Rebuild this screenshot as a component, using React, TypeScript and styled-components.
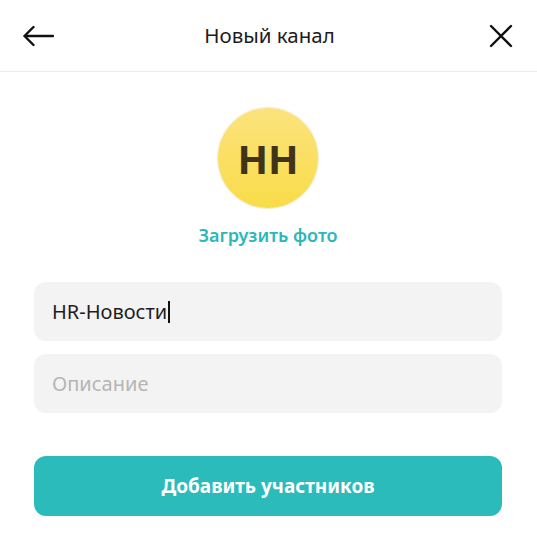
import React from "react";
import styled, { createGlobalStyle } from "styled-components";

const Global = createGlobalStyle`
  html, body { margin: 0; padding: 0; background: #ffffff; }
  body { font-family: "Noto Sans", "Open Sans", sans-serif; color: #1a1a1a; }
  * { box-sizing: border-box; }
`;

const Page = styled.div`
  width: 537px;
  height: 544px;
  background: #fff;
  display: flex;
  flex-direction: column;
`;

const Header = styled.header`
  height: 72px;
  border-bottom: 1px solid #ececec;
  display: grid;
  grid-template-columns: 60px 1fr 60px;
  align-items: center;
  padding: 0 18px 0 20px;
`;

const IconButton = styled.button<{ $end?: boolean }>`
  border: none;
  background: none;
  padding: 0;
  width: 36px;
  height: 36px;
  display: flex;
  align-items: center;
  justify-content: center;
  justify-self: ${(p) => (p.$end ? "end" : "start")};
  color: #111;
  cursor: pointer;
`;

const Title = styled.h1`
  margin: 0 0 1px;
  text-align: center;
  font-size: 20.5px;
  font-weight: 400;
  color: #1c1c1c;
`;

const Body = styled.main`
  display: flex;
  flex-direction: column;
  align-items: center;
  padding: 36px 35px 0 34px;
`;

const Avatar = styled.div`
  width: 100px;
  height: 100px;
  border-radius: 50%;
  background: linear-gradient(180deg, #fbe37d 0%, #f9dc49 100%);
  box-shadow: 0 0 0 1px rgba(230, 215, 160, 0.5);
  display: flex;
  align-items: center;
  justify-content: center;
  font-size: 40px;
  font-weight: 700;
  color: #3e3518;
  line-height: 1;
  padding-top: 2px;
`;

const UploadLink = styled.button`
  border: none;
  background: none;
  padding: 0;
  margin-top: 15px;
  font-family: inherit;
  font-size: 18px;
  line-height: 25px;
  font-weight: 600;
  color: #2cb8b9;
  cursor: pointer;
`;

const Fields = styled.div`
  width: 100%;
  display: flex;
  flex-direction: column;
  gap: 13px;
  margin-top: 34px;
`;

const Field = styled.div<{ $placeholder?: boolean }>`
  height: 59px;
  border-radius: 12px;
  background: #f3f3f3;
  display: flex;
  align-items: center;
  padding: 0 18px;
  font-size: 20px;
  color: ${(p) => (p.$placeholder ? "#b5b5b5" : "#1f1f1f")};
`;

const Caret = styled.span`
  display: inline-block;
  width: 2px;
  height: 22px;
  background: #111;
  margin-left: 1px;
`;

const PrimaryButton = styled.button`
  width: 100%;
  height: 60px;
  margin-top: 43px;
  border: none;
  border-radius: 12px;
  background: #2bbbbb;
  color: #fff;
  font-family: inherit;
  font-size: 19px;
  font-weight: 700;
  cursor: pointer;
`;

export default function App() {
  return (
    <Page>
      <Global />
      <Header>
        <IconButton aria-label="Назад">
          <svg width="32" height="22" viewBox="0 0 32 22" fill="none" stroke="#111" strokeWidth="2.4" strokeLinecap="round" strokeLinejoin="round">
            <path d="M31 11H2.5M11.5 2L2.5 11L11.5 20" />
          </svg>
        </IconButton>
        <Title>Новый канал</Title>
        <IconButton $end aria-label="Закрыть">
          <svg width="24" height="24" viewBox="0 0 24 24" fill="none" stroke="#111" strokeWidth="2.4" strokeLinecap="round">
            <path d="M2 2L22 22M22 2L2 22" />
          </svg>
        </IconButton>
      </Header>
      <Body>
        <Avatar>HH</Avatar>
        <UploadLink>Загрузить фото</UploadLink>
        <Fields>
          <Field>
            HR-Новости
            <Caret />
          </Field>
          <Field $placeholder>Описание</Field>
        </Fields>
        <PrimaryButton>Добавить участников</PrimaryButton>
      </Body>
    </Page>
  );
}
